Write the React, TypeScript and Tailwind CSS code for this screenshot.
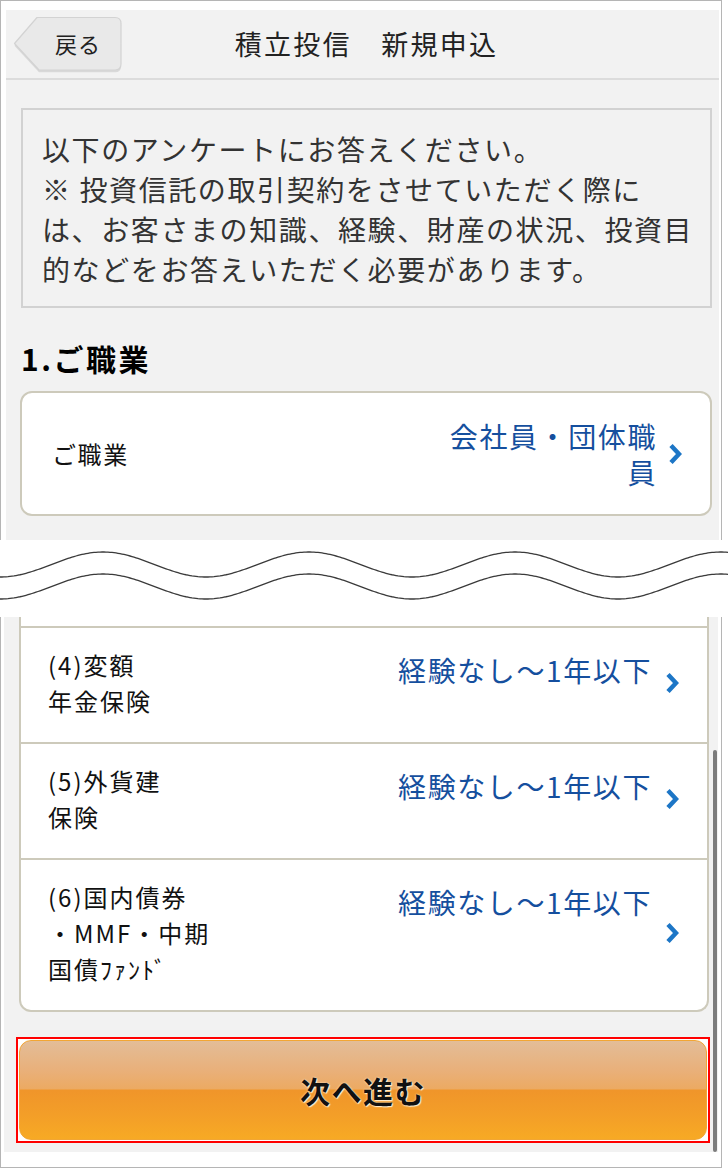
import * as React from 'react'

const FONT = "font-['Noto_Sans_CJK_JP','Noto_Sans',sans-serif]"

// sine-like tear line between the two screenshots
const wavePath = (cy: number) => {
    let d = ''
    for (let x = 0; x <= 728; x += 2) {
        const y = cy + 12.5 * Math.cos((2 * Math.PI * x) / 206)
        d += `${x === 0 ? 'M' : 'L'}${x} ${y.toFixed(2)} `
    }
    return d
}

const Chevron: React.FC<{ className?: string }> = ({ className }) => (
    <svg
        width="14"
        height="22"
        viewBox="0 0 14 22"
        className={className}
        aria-hidden="true"
    >
        <path
            d="M3 2.5 L11 11 L3 19.5"
            fill="none"
            stroke="#1d76c6"
            strokeWidth="4.5"
            strokeLinejoin="miter"
        />
    </svg>
)

const BackButton: React.FC = () => (
    <div className="relative ml-[7px] h-[57px] w-[110px]">
        <svg
            width="110"
            height="57"
            viewBox="0 0 110 57"
            className="absolute inset-0"
            aria-hidden="true"
        >
            <path
                d="M24 2.5 H102 Q108 2.5 108 8.5 V49 Q108 55 102 55 H26 L1.5 28.5 Z"
                fill="#d9d9d9"
                transform="translate(0 1.2)"
            />
            <path
                d="M24 1.5 H102 Q108 1.5 108 7.5 V48 Q108 54 102 54 H26 L1.5 27.5 Z"
                fill="#e9e9e9"
                stroke="#d3d3d3"
                strokeWidth="1.2"
                strokeLinejoin="round"
            />
        </svg>
        <span className="absolute left-[42px] top-[12px] text-[22px] leading-[30px] tracking-[1px] text-[#222]">
            戻る
        </span>
    </div>
)

interface RowProps {
    label: string[]
    value: string
}

const AnswerRow: React.FC<RowProps> = ({ label, value }) => (
    <div className="flex items-center border-t-2 border-[#cdcabb] pb-[23px] pl-[27px] pr-[28px] pt-[19px]">
        <div className="flex-1 text-[24px] leading-[36px] tracking-[2px] text-[#111]">
            {label.map((line, i) => (
                <div key={i}>{line}</div>
            ))}
        </div>
        <div className="mt-[3px] self-start whitespace-nowrap text-[28px] leading-[40px] tracking-[1.6px] text-[#154f9e]">
            {value}
        </div>
        <Chevron className="ml-[13px] shrink-0" />
    </div>
)

export default function App() {
    return (
        <div className={`h-[1169px] w-[728px] overflow-hidden bg-white ${FONT}`}>
            <div className="h-[1168px] w-[722px] border border-[#b5b5b5] bg-white pt-[9px]">
                {/* upper screenshot */}
                <div className="ml-[5px] h-[530px] w-[713px] bg-[#f2f2f2]">
                    <div className="grid h-[70px] grid-cols-[1fr_auto_1fr] items-center border-b-2 border-[#dcdcdc]">
                        <div className="flex items-center">
                            <BackButton />
                        </div>
                        <div className="pl-[8px] text-[27px] leading-[36px] tracking-[2.3px] text-[#222]">
                            積立投信　新規申込
                        </div>
                        <div />
                    </div>

                    <div className="ml-[15px] mt-[28px] w-[691px] border-2 border-[#d2d2d2] pb-[17px] pl-[19px] pt-[19px] text-[28px] leading-[40px] tracking-[1.6px] text-[#333]">
                        <div>以下のアンケートにお答えください。</div>
                        <div>※ 投資信託の取引契約をさせていただく際に</div>
                        <div>は、お客さまの知識、経験、財産の状況、投資目</div>
                        <div>的などをお答えいただく必要があります。</div>
                    </div>

                    <div className="ml-[15px] mt-[30px] text-[30px] font-bold leading-[40px] tracking-[2.5px] text-[#000]">
                        1.ご職業
                    </div>

                    <div className="ml-[14px] mt-[13px] flex h-[125px] w-[692px] items-center rounded-[12px] border-2 border-[#cdcabb] bg-white pl-[30px] pr-[28px]">
                        <div className="flex-1 text-[24px] leading-[36px] tracking-[1.6px] text-[#111]">
                            ご職業
                        </div>
                        <div className="shrink-0 text-right text-[28px] leading-[36px] tracking-[1.6px] text-[#154f9e]">
                            <div>会社員・団体職</div>
                            <div>員</div>
                        </div>
                        <Chevron className="ml-[11px] shrink-0" />
                    </div>
                </div>

                {/* tear between screenshots */}
                <div className="-ml-px h-[77px] w-[728px] bg-white">
                    <svg
                        width="728"
                        height="77"
                        viewBox="0 0 728 77"
                        aria-hidden="true"
                    >
                        <path
                            d={wavePath(24.5)}
                            fill="none"
                            stroke="#3a3a3a"
                            strokeWidth="1.3"
                        />
                        <path
                            d={wavePath(46.5)}
                            fill="none"
                            stroke="#3a3a3a"
                            strokeWidth="1.3"
                        />
                    </svg>
                </div>

                {/* lower screenshot */}
                <div className="relative ml-[3px] h-[535px] w-[714px] bg-[#f2f2f2]">
                    <div className="ml-[15px] w-[690px] overflow-hidden rounded-b-[12px] border-x-2 border-b-2 border-[#cdcabb] bg-white">
                        <div className="h-[9px]" />
                        <AnswerRow label={['(4)変額', '年金保険']} value="経験なし～1年以下" />
                        <AnswerRow label={['(5)外貨建', '保険']} value="経験なし～1年以下" />
                        <AnswerRow
                            label={['(6)国内債券', '・MMF・中期', '国債ﾌｧﾝﾄﾞ']}
                            value="経験なし～1年以下"
                        />
                    </div>

                    <div className="ml-[12px] mt-[25px] h-[106px] w-[694px] border-2 border-[#ff0000] bg-white p-px">
                        <div className="flex h-full items-center justify-center rounded-[12px] border border-[#f2a634] bg-[linear-gradient(to_bottom,#e3bd98_0%,#e9b07a_30%,#ecaa62_49%,#f0952a_50%,#f39e28_75%,#f7aa24_100%)]">
                            <span className="text-[30px] font-bold leading-[40px] tracking-[1.5px] text-[#111] [text-shadow:0_0_2px_#fff4dc,1px_1px_1px_#fff0d0]">
                                次へ進む
                            </span>
                        </div>
                    </div>

                    {/* scrollbar overlay */}
                    <div className="absolute bottom-0 right-[1px] top-[133px] w-[4px] rounded-full bg-[#7c7c7c]" />
                </div>
            </div>
        </div>
    )
}
